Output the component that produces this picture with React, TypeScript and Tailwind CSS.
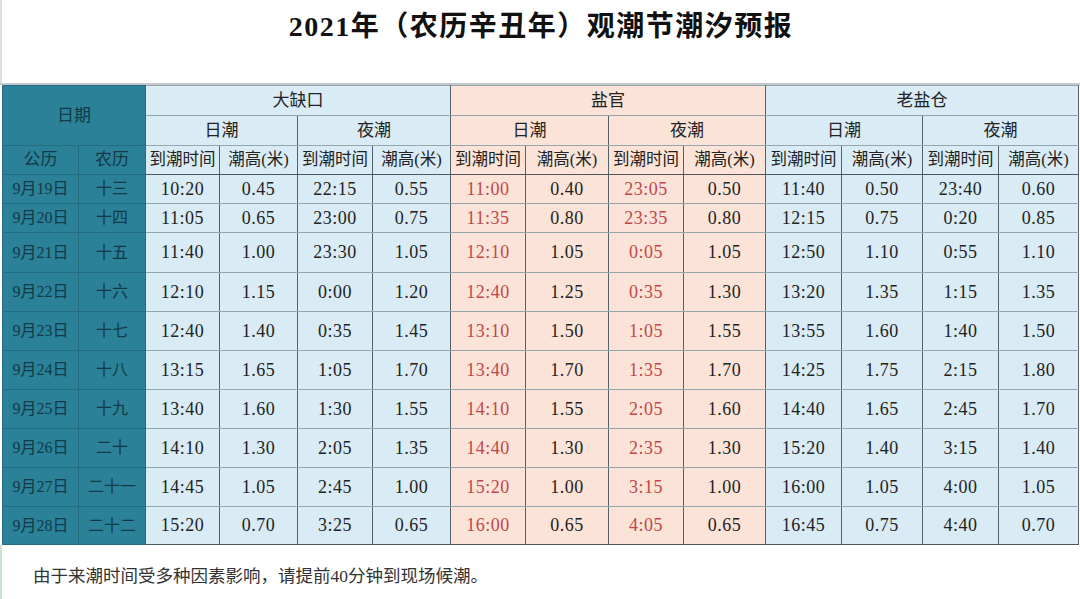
const rows = [
  ['9月19日', '十三', '10:20', '0.45', '22:15', '0.55', '11:00', '0.40', '23:05', '0.50', '11:40', '0.50', '23:40', '0.60'],
  ['9月20日', '十四', '11:05', '0.65', '23:00', '0.75', '11:35', '0.80', '23:35', '0.80', '12:15', '0.75', '0:20', '0.85'],
  ['9月21日', '十五', '11:40', '1.00', '23:30', '1.05', '12:10', '1.05', '0:05', '1.05', '12:50', '1.10', '0:55', '1.10'],
  ['9月22日', '十六', '12:10', '1.15', '0:00', '1.20', '12:40', '1.25', '0:35', '1.30', '13:20', '1.35', '1:15', '1.35'],
  ['9月23日', '十七', '12:40', '1.40', '0:35', '1.45', '13:10', '1.50', '1:05', '1.55', '13:55', '1.60', '1:40', '1.50'],
  ['9月24日', '十八', '13:15', '1.65', '1:05', '1.70', '13:40', '1.70', '1:35', '1.70', '14:25', '1.75', '2:15', '1.80'],
  ['9月25日', '十九', '13:40', '1.60', '1:30', '1.55', '14:10', '1.55', '2:05', '1.60', '14:40', '1.65', '2:45', '1.70'],
  ['9月26日', '二十', '14:10', '1.30', '2:05', '1.35', '14:40', '1.30', '2:35', '1.30', '15:20', '1.40', '3:15', '1.40'],
  ['9月27日', '二十一', '14:45', '1.05', '2:45', '1.00', '15:20', '1.00', '3:15', '1.00', '16:00', '1.05', '4:00', '1.05'],
  ['9月28日', '二十二', '15:20', '0.70', '3:25', '0.65', '16:00', '0.65', '4:05', '0.65', '16:45', '0.75', '4:40', '0.70'],
];

const rowHeights = [29, 29, 40, 39, 39, 39, 39, 39, 39, 38];
const colWidths = [76, 67, 74, 78, 75, 78, 75, 83, 75, 82, 76, 81, 76, 80];

const sites = [
  { name: '大缺口', bg: 'bg-[#d9ebf4]', peach: false },
  { name: '盐官', bg: 'bg-[#fbe4d7]', peach: true },
  { name: '老盐仓', bg: 'bg-[#d9ebf4]', peach: false },
];

const teal = 'bg-[#2a8198] text-[#133a46] border border-[#246d80]';
const cell = 'border-x border-y border-x-[#56646a] border-y-[#96a6ad] text-center';

export default function App() {
  return (
    <div
      className="w-[1080px] h-[599px] bg-white overflow-hidden"
      style={{ fontFamily: '"Liberation Serif", "Noto Sans CJK SC", serif' }}
    >
      <div className="h-[83px] border-l-2 border-[#dedede] flex justify-center pt-[10px]">
        <h1 className="text-[28px] leading-[34px] font-bold text-[#111] tracking-[1.5px]">
          2021年（农历辛丑年）观潮节潮汐预报
        </h1>
      </div>

      <div className="border-t-2 border-[#c4c8ca]">
        <table className="table-fixed border-collapse ml-[2px] w-[1076px] text-[#222]">
          <colgroup>
            {colWidths.map((w, i) => (
              <col key={i} style={{ width: w }} />
            ))}
          </colgroup>
          <thead>
            <tr className="h-[30px]">
              <th colSpan={2} rowSpan={2} className={`${teal} font-normal text-[17px]`}>
                日期
              </th>
              {sites.map((s) => (
                <th key={s.name} colSpan={4} className={`${cell} ${s.bg} font-normal text-[17px]`}>
                  {s.name}
                </th>
              ))}
            </tr>
            <tr className="h-[30px]">
              {sites.map((s) => (
                <>
                  <th key={s.name + 'd'} colSpan={2} className={`${cell} ${s.bg} font-normal text-[17px]`}>
                    日潮
                  </th>
                  <th key={s.name + 'n'} colSpan={2} className={`${cell} ${s.bg} font-normal text-[17px]`}>
                    夜潮
                  </th>
                </>
              ))}
            </tr>
            <tr className="h-[29px]">
              <th className={`${teal} font-normal text-[17px]`}>公历</th>
              <th className={`${teal} font-normal text-[17px]`}>农历</th>
              {sites.map((s) =>
                [0, 1].map((k) => (
                  <>
                    <th key={s.name + k + 't'} className={`${cell} ${s.bg} font-normal text-[16.5px] whitespace-nowrap border-b-[#4d585d]`}>
                      到潮时间
                    </th>
                    <th key={s.name + k + 'h'} className={`${cell} ${s.bg} font-normal text-[16.5px] whitespace-nowrap border-b-[#4d585d]`}>
                      潮高(米)
                    </th>
                  </>
                ))
              )}
            </tr>
          </thead>
          <tbody>
            {rows.map((r, i) => (
              <tr key={r[0]} style={{ height: rowHeights[i] }}>
                <td className={`${teal} text-center text-[16px] whitespace-nowrap`}>{r[0]}</td>
                <td className={`${teal} text-center text-[16px] whitespace-nowrap`}>{r[1]}</td>
                {r.slice(2).map((v, j) => {
                  const site = sites[Math.floor(j / 4)];
                  const isTime = j % 2 === 0;
                  const red = site.peach && isTime;
                  return (
                    <td
                      key={j}
                      className={`${cell} ${site.bg} text-[18px] tracking-[0.5px] ${red ? 'text-[#c2464b]' : 'text-[#222]'} ${
                        i === rows.length - 1 ? 'border-b-[#4d585d]' : ''
                      }`}
                    >
                      {v}
                    </td>
                  );
                })}
              </tr>
            ))}
          </tbody>
        </table>
      </div>

      <div className="h-[56px] border-l-2 border-[#cfe2cf] pl-[31px] pt-[19px]">
        <p className="text-[17.5px] leading-[24px] text-[#333]">
          由于来潮时间受多种因素影响，请提前40分钟到现场候潮。
        </p>
      </div>
    </div>
  );
}
